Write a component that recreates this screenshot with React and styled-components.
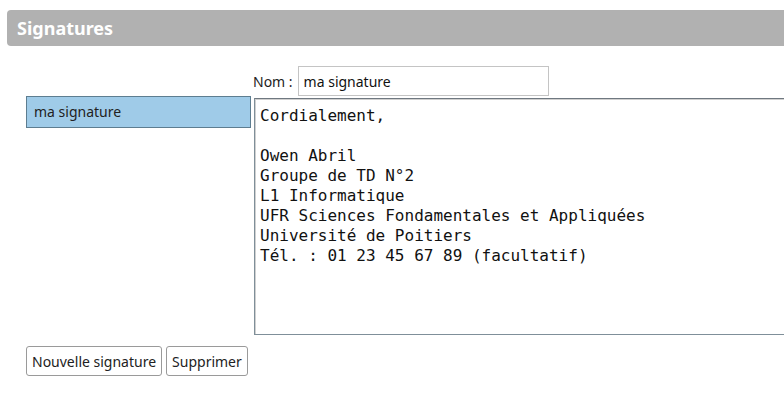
import React, { useState } from 'react';
import styled, { createGlobalStyle } from 'styled-components';

const GlobalStyle = createGlobalStyle`
    html, body {
        margin: 0;
        padding: 0;
        background: #fff;
        font-family: "Noto Sans", "Open Sans", sans-serif;
        color: #222;
    }
`;

const initialText = `Cordialement,

Owen Abril
Groupe de TD N°2
L1 Informatique
UFR Sciences Fondamentales et Appliquées
Université de Poitiers
Tél. : 01 23 45 67 89 (facultatif)`;

const App = () => {
    const [name, setName] = useState('ma signature');
    const [body, setBody] = useState(initialText);

    return (
        <Page>
            <GlobalStyle />
            <Header>Signatures</Header>

            <NameRow>
                <NameLabel htmlFor="sig-name">Nom :</NameLabel>
                <NameInput id="sig-name" value={name} onChange={e => setName(e.target.value)} />
            </NameRow>

            <Editor>
                <SignatureList>
                    <SignatureItem selected>{name}</SignatureItem>
                </SignatureList>
                <BodyArea value={body} onChange={e => setBody(e.target.value)} spellCheck={false} />
            </Editor>

            <Actions>
                <Button>Nouvelle signature</Button>
                <Button>Supprimer</Button>
            </Actions>
        </Page>
    );
};
export default App;

const Page = styled.div`
    width: 784px;
    height: 410px;
    overflow: hidden;
    padding-top: 10px;
    box-sizing: border-box;
`;

const Header = styled.h2`
    margin: 0 0 0 7px;
    height: 36px;
    padding-left: 10px;
    background: #b1b1b1;
    border-radius: 4px 0 0 4px;
    color: #fff;
    font-size: 18px;
    font-weight: bold;
    line-height: 37px;
`;

const NameRow = styled.div`
    display: flex;
    align-items: center;
    gap: 5px;
    margin: 20px 0 0 253px;
    height: 30px;
`;

const NameLabel = styled.label`
    font-size: 14px;
    color: #222;
`;

const NameInput = styled.input`
    box-sizing: border-box;
    width: 251px;
    height: 30px;
    padding: 0 5px;
    border: 1px solid #c4c4c4;
    font-family: inherit;
    font-size: 14px;
    color: #111;
    outline: none;
`;

const Editor = styled.div`
    display: flex;
    align-items: flex-start;
    gap: 3px;
    margin-left: 26px;
`;

const SignatureList = styled.div`
    flex: 0 0 225px;
    display: flex;
    flex-direction: column;
`;

const SignatureItem = styled.div`
    box-sizing: border-box;
    height: 32px;
    padding: 0 7px;
    border: 1px solid ${p => (p.selected ? '#5d7d90' : 'transparent')};
    background: ${p => (p.selected ? '#9fcbe8' : 'transparent')};
    font-size: 14px;
    line-height: 30px;
    color: #222;
`;

const BodyArea = styled.textarea`
    flex: 0 0 600px;
    box-sizing: border-box;
    margin-top: 2px;
    height: 237px;
    padding: 7px 5px 4px;
    border: 1px solid #7f8f99;
    border-top-color: #6f7880;
    box-shadow: inset 1px 1px 0 #d0d0d0;
    resize: none;
    outline: none;
    font-family: "DejaVu Sans Mono", "Liberation Mono", monospace;
    font-size: 16px;
    line-height: 20px;
    color: #111;
`;

const Actions = styled.div`
    display: flex;
    gap: 4px;
    margin: 11px 0 0 26px;
`;

const Button = styled.button`
    height: 30px;
    padding: 0 5px;
    background: #fff;
    border: 1px solid #9a9a9a;
    border-radius: 3px;
    font-family: inherit;
    font-size: 14px;
    color: #222;
`;
